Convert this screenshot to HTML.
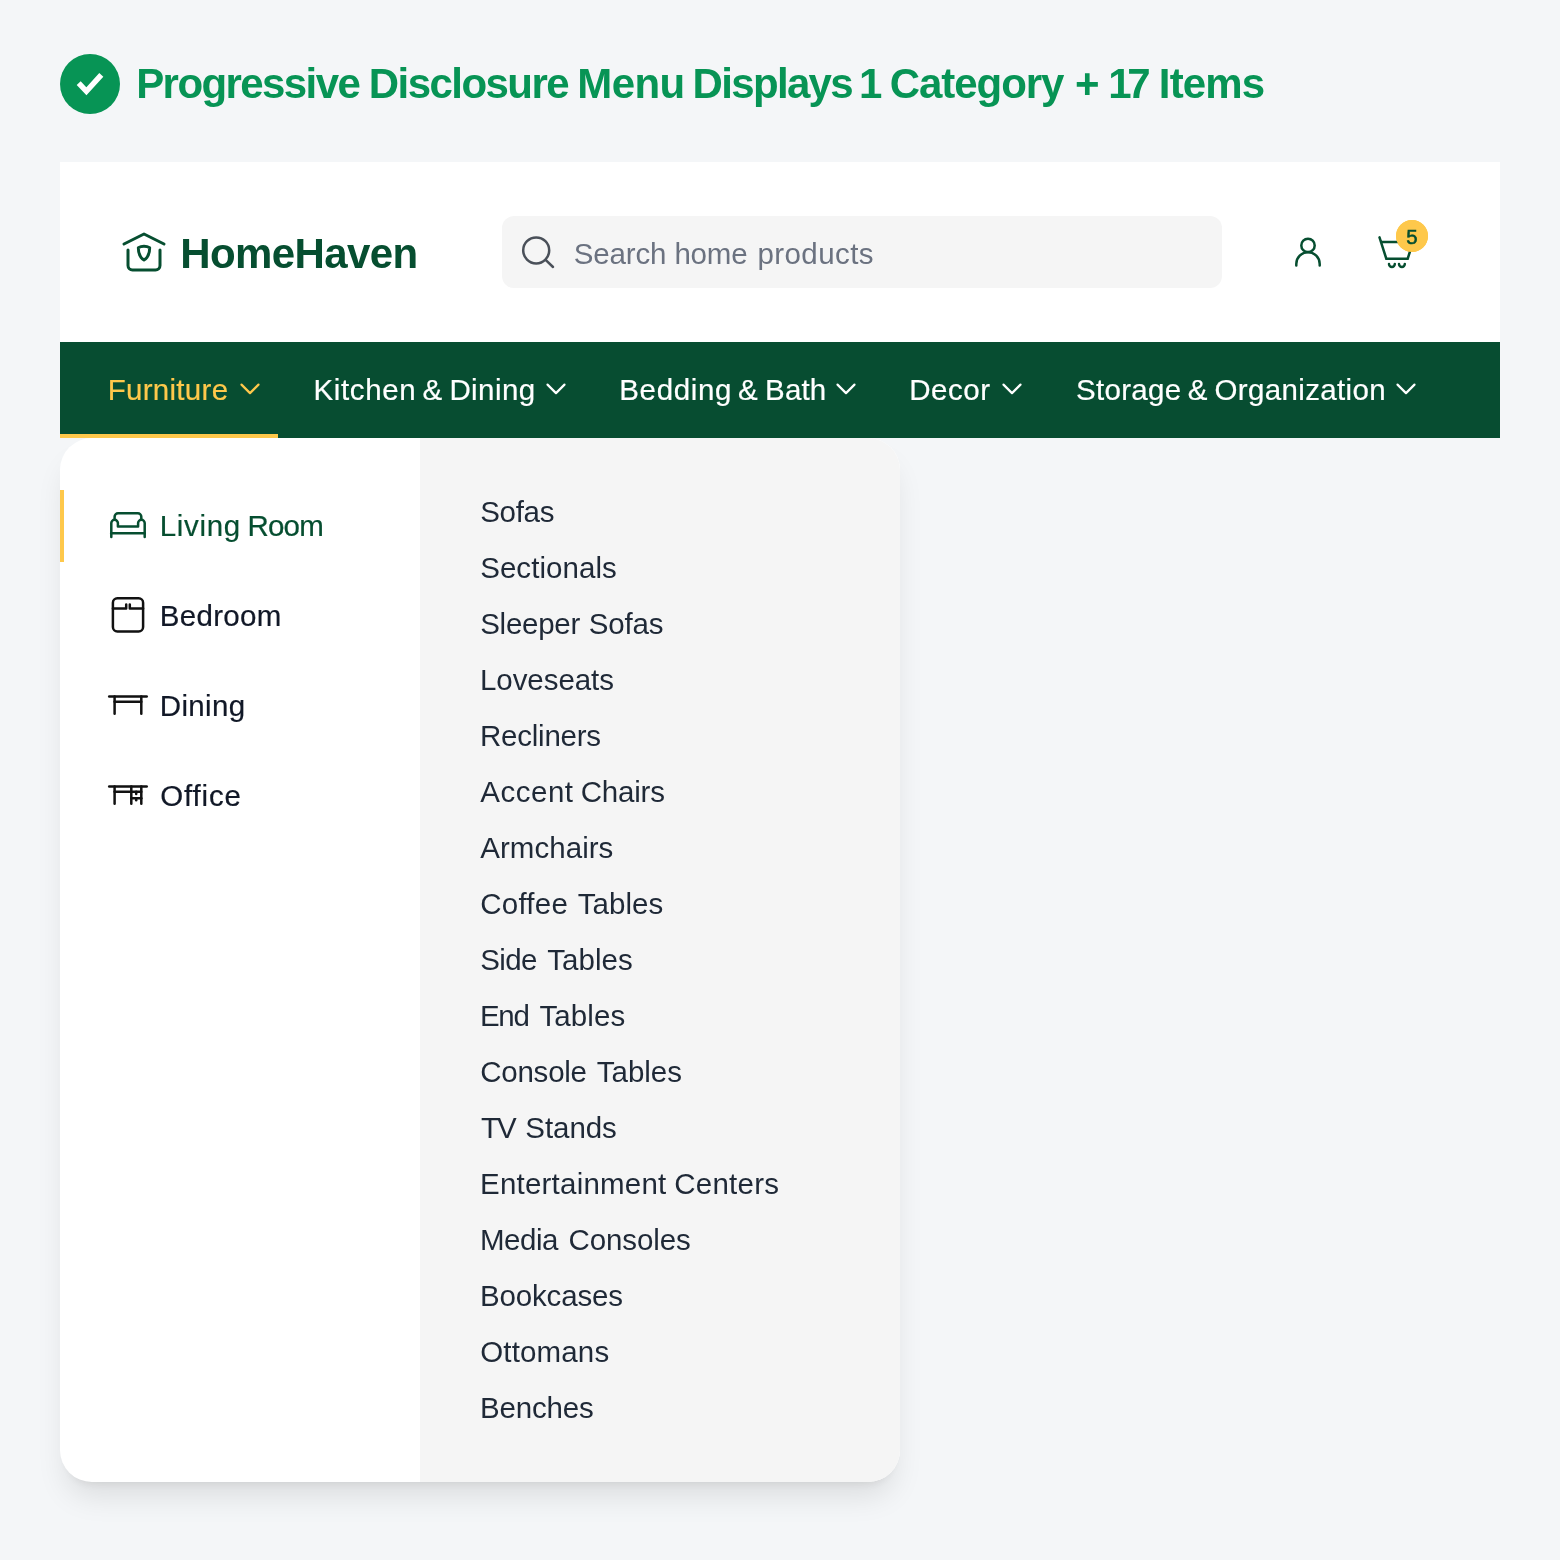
<!DOCTYPE html>
<html lang="en">
<head>
<meta charset="utf-8">
<title>Progressive Disclosure Menu</title>
<style>
*{box-sizing:border-box;margin:0;padding:0}
ul{list-style:none}
a{text-decoration:none}
html,body{width:1560px;height:1560px;overflow:hidden}
body{background:#f4f6f8;font-family:"Liberation Sans", sans-serif;position:relative;color:#1f2937;-webkit-font-smoothing:antialiased}
#root{position:absolute;left:0;top:0;width:1560px;height:1560px;will-change:transform}
.abs{position:absolute;white-space:nowrap}
.t{position:absolute;white-space:nowrap;line-height:1}
.t span{position:absolute;top:0}
.check{left:60px;top:54px;width:60px;height:60px;border-radius:50%;background:#079455}
.title{left:136px;top:64px;font-size:40px;font-weight:700;color:#079455}
.card{left:60px;top:162px;width:1440px;height:180px;background:#fff}
.brand{left:180px;top:233px;font-size:40px;font-weight:700;color:#064e30}
.search{left:502px;top:216px;width:720px;height:72px;border-radius:12px;background:#f5f5f5}
.ph{left:574px;top:240px;font-size:28px;color:#6b7280}
.badge{left:1396px;top:220px;width:32px;height:32px;border-radius:50%;background:#fec84b}
.badgen{left:1396px;top:227px;width:32px;text-align:center;font-size:20.5px;font-weight:400;color:#064e30;-webkit-text-stroke:0.55px #064e30}
.nav{left:60px;top:342px;width:1440px;height:96px;background:#074d31}
.ul{left:60px;top:434px;width:218px;height:4px;background:#fec84b}
.n{top:375px;font-size:28px;font-weight:500;color:#fff;-webkit-text-stroke:0.2px currentColor}
.n.act{color:#fec84b}
.panel{left:60px;top:438px;width:840px;height:1044px;border-radius:32px;background:#fff;box-shadow:0 20px 30px -6px rgba(0,0,0,.1),0 8px 12px -8px rgba(0,0,0,.1);overflow:hidden}
.right{left:360px;top:0;width:480px;height:1044px;background:#f5f5f5}
.bar{left:60px;top:490px;width:4px;height:72px;background:#fec84b}
.c{left:160px;font-size:28px;font-weight:500;color:#111827;-webkit-text-stroke:0.2px currentColor}
.c.act{color:#064e30}
.i{left:480px;font-size:28px;color:#1f2937}
svg{position:absolute;left:0;top:0;overflow:visible}
</style>
</head>
<body>
<div id="root">
<div class="abs check"></div>
<h1 class="t title" id="title" style="left:0;top:63px;font-size:42px"><span style="left:136.2px;letter-spacing:-1.582px">Progressive</span> <span style="left:368.8px;letter-spacing:-1.555px">Disclosure</span> <span style="left:577.2px;letter-spacing:-0.533px">Menu</span> <span style="left:692.6px;letter-spacing:-1.671px">Displays</span> <span style="left:859.05px">1</span> <span style="left:889.8px;letter-spacing:-1.056px">Category</span> <span style="left:1075.05px">+</span> <span style="left:1108.3px;letter-spacing:-4.458px">17</span> <span style="left:1158.8px;letter-spacing:-0.84px">Items</span></h1>

<header>
<div class="abs card"></div>
<div class="t brand" id="brand" style="left:0;top:233px;font-size:42px"><span style="left:180.3px;letter-spacing:-0.624px">HomeHaven</span></div>
<div class="abs search"></div>
<div class="t ph" id="ph" style="left:0;top:239px;font-size:29.5px"><span style="left:573.8px;letter-spacing:-0.169px">Search</span> <span style="left:674.43px;letter-spacing:-0.207px">home</span> <span style="left:757.38px;letter-spacing:0.432px">products</span></div>
<div class="abs badge"></div>
</header>

<nav>
<div class="abs nav"></div>
<div class="abs ul"></div>
<a class="t n act" id="n1" style="left:0;top:375px;font-size:29.5px"><span style="left:107.7px;letter-spacing:0.295px">Furniture</span></a>
<a class="t n" id="n2" style="left:0;top:375px;font-size:29.5px"><span style="left:313.5px;letter-spacing:0.62px">Kitchen</span> <span style="left:422.59px">&amp;</span> <span style="left:449.41px;letter-spacing:0.413px">Dining</span></a>
<a class="t n" id="n3" style="left:0;top:375px;font-size:29.5px"><span style="left:619.3px;letter-spacing:0.65px">Bedding</span> <span style="left:738.11px">&amp;</span> <span style="left:765.11px;letter-spacing:0.104px">Bath</span></a>
<a class="t n" id="n4" style="left:0;top:375px;font-size:29.5px"><span style="left:909.2px;letter-spacing:0.533px">Decor</span></a>
<a class="t n" id="n5" style="left:0;top:375px;font-size:29.5px"><span style="left:1076.0px;letter-spacing:0.298px">Storage</span> <span style="left:1187.7px">&amp;</span> <span style="left:1214.54px;letter-spacing:0.355px">Organization</span></a>
</nav>

<div class="abs panel"><div class="abs right"></div></div>
<div class="abs bar"></div>
<ul>
<li class="t c act" id="c1" style="left:0;top:511px;font-size:29.5px"><span style="left:159.8px;letter-spacing:0.653px">Living</span> <span style="left:247.56px;letter-spacing:-0.826px">Room</span></li>
<li class="t c" id="c2" style="left:0;top:601px;font-size:29.5px"><span style="left:159.8px;letter-spacing:0.312px">Bedroom</span></li>
<li class="t c" id="c3" style="left:0;top:691px;font-size:29.5px"><span style="left:159.8px;letter-spacing:0.335px">Dining</span></li>
<li class="t c" id="c4" style="left:0;top:781px;font-size:29.5px"><span style="left:160.2px;letter-spacing:0.838px">Office</span></li>
</ul>
<ul>
<li class="t i" id="i1" style="left:0;top:497px;font-size:29.5px"><span style="left:480.2px;letter-spacing:-0.296px">Sofas</span></li>
<li class="t i" id="i2" style="left:0;top:553px;font-size:29.5px"><span style="left:480.2px;letter-spacing:0.049px">Sectionals</span></li>
<li class="t i" id="i3" style="left:0;top:609px;font-size:29.5px"><span style="left:480.2px;letter-spacing:-0.264px">Sleeper</span> <span style="left:588.83px;letter-spacing:-0.179px">Sofas</span></li>
<li class="t i" id="i4" style="left:0;top:665px;font-size:29.5px"><span style="left:480.0px;letter-spacing:-0.066px">Loveseats</span></li>
<li class="t i" id="i5" style="left:0;top:721px;font-size:29.5px"><span style="left:480.0px;letter-spacing:-0.238px">Recliners</span></li>
<li class="t i" id="i6" style="left:0;top:777px;font-size:29.5px"><span style="left:480.3px;letter-spacing:0.5px">Accent</span> <span style="left:580.76px;letter-spacing:-0.211px">Chairs</span></li>
<li class="t i" id="i7" style="left:0;top:833px;font-size:29.5px"><span style="left:480.3px;letter-spacing:0.036px">Armchairs</span></li>
<li class="t i" id="i8" style="left:0;top:889px;font-size:29.5px"><span style="left:480.2px;letter-spacing:0.254px">Coffee</span> <span style="left:577.63px;letter-spacing:0.069px">Tables</span></li>
<li class="t i" id="i9" style="left:0;top:945px;font-size:29.5px"><span style="left:480.2px;letter-spacing:-0.605px">Side</span> <span style="left:547.21px;letter-spacing:0.074px">Tables</span></li>
<li class="t i" id="i10" style="left:0;top:1001px;font-size:29.5px"><span style="left:480.0px;letter-spacing:-1.353px">End</span> <span style="left:539.4px;letter-spacing:0.096px">Tables</span></li>
<li class="t i" id="i11" style="left:0;top:1057px;font-size:29.5px"><span style="left:480.2px;letter-spacing:-0.232px">Console</span> <span style="left:596.77px;letter-spacing:-0.018px">Tables</span></li>
<li class="t i" id="i12" style="left:0;top:1113px;font-size:29.5px"><span style="left:481.0px;letter-spacing:-1.903px">TV</span> <span style="left:525.32px;letter-spacing:-0.063px">Stands</span></li>
<li class="t i" id="i13" style="left:0;top:1169px;font-size:29.5px"><span style="left:480.0px;letter-spacing:0.22px">Entertainment</span> <span style="left:674.22px;letter-spacing:0.256px">Centers</span></li>
<li class="t i" id="i14" style="left:0;top:1225px;font-size:29.5px"><span style="left:480.0px;letter-spacing:-0.488px">Media</span> <span style="left:568.51px;letter-spacing:-0.092px">Consoles</span></li>
<li class="t i" id="i15" style="left:0;top:1281px;font-size:29.5px"><span style="left:480.0px;letter-spacing:-0.169px">Bookcases</span></li>
<li class="t i" id="i16" style="left:0;top:1337px;font-size:29.5px"><span style="left:480.2px;letter-spacing:0.153px">Ottomans</span></li>
<li class="t i" id="i17" style="left:0;top:1393px;font-size:29.5px"><span style="left:480.0px;letter-spacing:-0.175px">Benches</span></li>
</ul>
<svg width="1560" height="1560" viewBox="0 0 1560 1560" fill="none" stroke-linecap="round" stroke-linejoin="round">
<!-- check -->
<path d="M78.7 83.2 L86.4 91.3 L101.3 74.9" stroke="#fff" stroke-width="5.5" stroke-linecap="butt" stroke-linejoin="miter"/>
<!-- logo -->
<g stroke="#064e30" stroke-width="3">
<path d="M124 244 L144 234 L164 244"/>
<path d="M128 250 V265.5 a4.5 4.5 0 0 0 4.5 4.5 H155.5 a4.5 4.5 0 0 0 4.5 -4.5 V250"/>
<path d="M144 246.3 C141.8 246.3 139.6 247 138.3 247.8 C138.3 253.5 140.6 258 144 260 C147.4 258 149.7 253.5 149.7 247.8 C148.4 247 146.2 246.3 144 246.3 Z" stroke-width="2.9"/>
</g>
<!-- search -->
<g stroke="#4a5059" stroke-width="2.5">
<circle cx="536.2" cy="250.4" r="13"/>
<path d="M545.6 259.8 L553 267"/>
</g>
<!-- user -->
<g stroke="#064e30" stroke-width="2.5">
<circle cx="1308" cy="245.4" r="6.7"/>
<path d="M1296.3 265.6 V264 a11.7 11.7 0 0 1 23.4 0 V265.6"/>
</g>
<!-- cart -->
<g stroke="#064e30" stroke-width="2.5" stroke-linecap="round" stroke-linejoin="miter">
<path d="M1379.5 237.4 L1386.3 258.7 H1407.7 L1413 242 H1382"/>
<path d="M1389 264 a2.9 2.9 0 0 0 5.8 0"/>
<path d="M1399 264 a2.9 2.9 0 0 0 5.8 0"/>
</g>
<circle cx="1412" cy="236" r="16" fill="#fec84b"/>
<!-- chevrons -->
<g stroke-width="2.2">
<path d="M241.5 384.6 L250 393.1 L258.5 384.6" stroke="#fec84b"/>
<path d="M547.5 384.6 L556 393.1 L564.5 384.6" stroke="#fff"/>
<path d="M837.5 384.6 L846 393.1 L854.5 384.6" stroke="#fff"/>
<path d="M1003.5 384.6 L1012 393.1 L1020.5 384.6" stroke="#fff"/>
<path d="M1397.5 384.6 L1406 393.1 L1414.5 384.6" stroke="#fff"/>
</g>
<!-- sofa -->
<g stroke="#064e30" stroke-width="2.5">
<path d="M114.6 518.8 V516.8 a3.5 3.5 0 0 1 3.5 -3.5 H137.8 a3.5 3.5 0 0 1 3.5 3.5 V518.8"/>
<path d="M111.3 536.9 V523.1 a3.3 3.3 0 0 1 6.6 0 V526.5 H138.1 V523.1 a3.3 3.3 0 0 1 6.6 0 V536.9"/>
<path d="M111.3 533.3 H144.6"/>
</g>
<!-- bedroom -->
<g stroke="#111" stroke-width="2.5">
<rect x="112.9" y="598.3" width="30.2" height="33.2" rx="4.5"/>
<path d="M112.9 608.5 H126.2 V604.6"/>
<path d="M143.1 608.5 H129.8 V604.6"/>
</g>
<!-- dining -->
<g stroke="#111" stroke-width="2.5">
<path d="M109.2 696.5 H146.7"/>
<path d="M114.6 696.5 V713.7"/>
<path d="M141.3 696.5 V713.7"/>
<path d="M114.6 701.7 H141.3"/>
</g>
<!-- office -->
<g stroke="#111" stroke-width="2.5">
<path d="M109.2 786.5 H146.7"/>
<path d="M114.6 786.5 V803.7"/>
<path d="M141.3 786.5 V803.7"/>
<path d="M131.3 786.5 V803.7"/>
<path d="M114.6 791.7 H141.3"/>
<path d="M131.3 798.3 H141.3"/>
<path d="M136.2 791.7 V794"/>
<path d="M136.2 798.3 V800.3"/>
</g>
</svg>
<div class="t badgen" id="bn">5</div>
</div>
</body>
</html>
